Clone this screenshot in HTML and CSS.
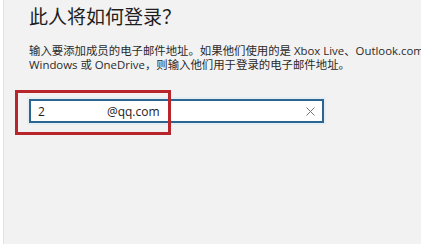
FILE: index.html
```html
<!DOCTYPE html>
<html lang="zh-CN">
<head>
    <meta charset="UTF-8">
    <title>添加用户</title>
    <link rel="stylesheet" href="styles.css">
</head>
<body>
<div class="panel">
    <h1 class="title">此人将如何登录？</h1>
    <p class="desc">输入要添加成员的电子邮件地址。如果他们使用的是 Xbox Live、Outlook.com、<br>Windows 或 OneDrive，则输入他们用于登录的电子邮件地址。</p>
    <div class="field">
        <div class="textbox">
            <span class="val">2</span>
            <span class="hide"></span>
            <span class="val">@qq.com</span>
            <span class="clear">
                <svg width="9" height="9" viewBox="0 0 9 9">
                    <path d="M0.5 0.5 L8.5 8.5 M8.5 0.5 L0.5 8.5" stroke="#777" stroke-width="1" fill="none"/>
                </svg>
            </span>
        </div>
        <!-- 红框标注 -->
        <div class="mark"></div>
    </div>
</div>
</body>
</html>
```

FILE: styles.css
```css
*{
    padding: 0px;
    margin: 0px;
}
html, body{
    width: 100%;
    height: 100%;
    overflow: hidden;
}
body{
    background: white;
    font-family: "Open Sans", "Noto Sans CJK SC", sans-serif;
}
.panel{
    margin: 0 1px 0 3px;
    height: 244px;
    background: #f2f2f2;
    border-left: 1px solid #e2e2e2;
    padding-left: 25px;
    white-space: nowrap;
    overflow: hidden;
}
.title{
    padding-top: 4px;
    font-family: "Noto Sans CJK SC", sans-serif;
    font-size: 19px;
    line-height: 24px;
    font-weight: 400;
    color: #1e1e1e;
}
.desc{
    margin-top: 16px;
    font-size: 11.4px;
    line-height: 14px;
    color: #2a2a2a;
}
.field{
    position: relative;
    margin-top: 27px;
    width: 295px;
}
.textbox{
    display: flex;
    align-items: center;
    height: 24px;
    box-sizing: border-box;
    background: white;
    border: 2px solid #2b6592;
    box-shadow: 0 0 0 2px #e6edf3;
    padding-left: 7px;
    font-size: 12px;
    color: #222;
}
.hide{
    display: inline-block;
    width: 62px;
}
.clear{
    margin-left: auto;
    margin-right: 7px;
    display: flex;
}
.mark{
    position: absolute;
    left: -14px;
    top: -9px;
    width: 156px;
    height: 45px;
    box-sizing: border-box;
    border: 3px solid #b8262c;
}
```
